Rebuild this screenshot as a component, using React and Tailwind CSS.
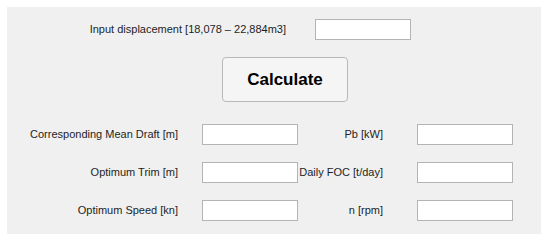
import React from "react";

const Field = () => (
  <input
    type="text"
    className="h-[21px] w-[96px] border border-[#b4b4b4] bg-white outline-none"
  />
);

const rows = [
  ["Corresponding Mean Draft [m]", "Pb [kW]"],
  ["Optimum Trim [m]", "Daily FOC [t/day]"],
  ["Optimum Speed [kn]", "n [rpm]"],
];

export default function App() {
  return (
    <div className="h-[244px] w-[550px] bg-white pt-[7px] pl-[7px]">
      <div
        className="h-[227px] w-[534px] bg-[#f0f0f0] pt-[12px] text-[11px] text-[#1e1e1e]"
        style={{ fontFamily: "Arial, 'Liberation Sans', sans-serif" }}
      >
        <div className="flex items-center">
          <div className="w-[279px] whitespace-nowrap text-right">Input displacement [18,078 – 22,884m3]</div>
          <div className="ml-[29px]">
            <Field />
          </div>
        </div>

        <div className="mt-[17px] pl-[215px]">
          <button className="h-[45px] w-[126px] rounded-[4px] border border-[#b9b9b9] bg-[#f5f5f5] text-[17px] font-bold text-black">
            Calculate
          </button>
        </div>

        <div className="mt-[22px] flex flex-col gap-[17px]">
          {rows.map(([left, right], i) => (
            <div key={i} className="flex h-[21px] items-center">
              <div className="w-[171px] whitespace-nowrap text-right">{left}</div>
              <div className="ml-[24px]">
                <Field />
              </div>
              <div className="w-[85px] whitespace-nowrap text-right">{right}</div>
              <div className="ml-[34px]">
                <Field />
              </div>
            </div>
          ))}
        </div>
      </div>
    </div>
  );
}
